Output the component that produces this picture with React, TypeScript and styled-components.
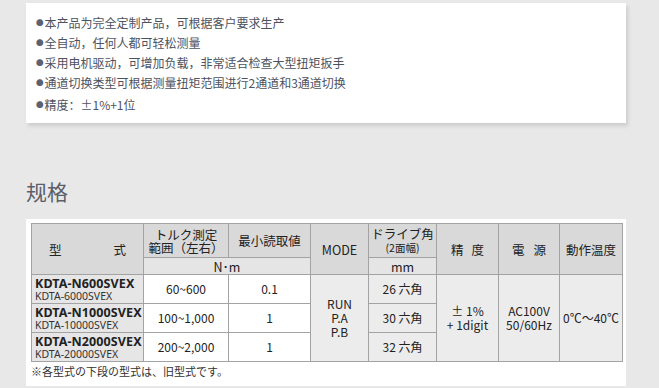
import React from 'react';
import styled, { createGlobalStyle } from 'styled-components';

const GlobalStyle = createGlobalStyle`
  html, body {
    margin: 0;
    padding: 0;
    background: #e8e8e8;
  }
  body {
    font-family: "Noto Sans CJK SC", "Noto Sans", sans-serif;
  }
`;

const Page = styled.div`
  width: 600px;
  padding: 3px 0 0 26px;
`;

const FeatureCard = styled.div`
  background: #fff;
  padding: 10px 10px 8px;
  box-shadow: 2px 3px 4px rgba(0, 0, 0, 0.12);
`;

const Feature = styled.p<{ gap?: number }>`
  margin: ${({ gap }) => gap || 0}px 0 0;
  font-size: 12px;
  line-height: 20px;
  color: #4c525e;
  &::before {
    content: '●';
    font-size: 7.5px;
    color: #5a6170;
    vertical-align: 2px;
    margin-right: 1px;
  }
`;

const Heading = styled.h2`
  margin: 55px 0 0;
  font-size: 21px;
  font-weight: 400;
  line-height: 26px;
  color: #5a5f6a;
`;

const TablePanel = styled.div`
  margin-top: 15px;
  background: #fff;
  padding: 4px 4px 7px 5px;
`;

const Spec = styled.table`
  border-collapse: collapse;
  table-layout: fixed;
  width: 591px;
  font-family: "Noto Sans CJK JP", sans-serif;
  color: #222;
  td, th {
    border: 1px solid #a3a3a3;
    padding: 0;
    text-align: center;
    vertical-align: middle;
    font-weight: 400;
  }
`;

const Head = styled.th<{ tone?: 'sub' }>`
  background: ${({ tone }) => (tone === 'sub' ? '#e5e5e5' : '#d9d9d9')};
  font-size: 12.5px;
  line-height: 13px;
  height: ${({ tone }) => (tone === 'sub' ? 16 : 33)}px;
`;

const Spread = styled.div`
  display: flex;
  justify-content: space-between;
  padding: 0 ${({ pad }: { pad: number }) => pad}px;
`;

const Small = styled.span`
  font-size: 10.5px;
`;

const ModelCell = styled.td`
  background: #e6e6e6;
  text-align: left !important;
  padding-left: 3px !important;
  height: 28px;
  b {
    display: block;
    font-family: "Noto Sans", sans-serif;
    font-size: 12.5px;
    line-height: 13px;
    font-weight: 700;
    letter-spacing: 0.1px;
  }
  span {
    display: block;
    font-family: "Noto Sans", sans-serif;
    font-size: 10.5px;
    line-height: 12px;
    color: #333;
  }
`;

const Cell = styled.td<{ shade?: boolean }>`
  background: ${({ shade }) => (shade ? '#ececec' : '#fff')};
  font-size: 12px;
  line-height: 14px;
`;

const Note = styled.div`
  font-family: "Noto Sans CJK JP", sans-serif;
  font-size: 11px;
  line-height: 16px;
  color: #333;
  margin-top: 1px;
`;

const features = [
  '本产品为完全定制产品，可根据客户要求生产',
  '全自动，任何人都可轻松测量',
  '采用电机驱动，可增加负载，非常适合检查大型扭矩扳手',
  '通道切换类型可根据测量扭矩范围进行2通道和3通道切换',
  '精度：±1%+1位',
];

const models = [
  { name: 'KDTA-N600SVEX', old: 'KDTA-6000SVEX', range: '60~600', min: '0.1', drive: '26 六角' },
  { name: 'KDTA-N1000SVEX', old: 'KDTA-10000SVEX', range: '100~1,000', min: '1', drive: '30 六角' },
  { name: 'KDTA-N2000SVEX', old: 'KDTA-20000SVEX', range: '200~2,000', min: '1', drive: '32 六角' },
];

const widths = [112, 85, 82, 58, 68, 62, 61, 63];

export default function App() {
  return (
    <Page>
      <GlobalStyle />
      <FeatureCard>
        {features.map((f, i) => (
          <Feature key={f} gap={i === 4 ? 2 : 0}>
            {f}
          </Feature>
        ))}
      </FeatureCard>

      <Heading>规格</Heading>

      <TablePanel>
        <Spec>
          <colgroup>
            {widths.map((w, i) => (
              <col key={i} style={{ width: w }} />
            ))}
          </colgroup>
          <thead>
            <tr>
              <Head rowSpan={2}>
                <Spread pad={17}>
                  <span>型</span>
                  <span>式</span>
                </Spread>
              </Head>
              <Head>
                トルク測定
                <br />
                範囲（左右）
              </Head>
              <Head>最小読取値</Head>
              <Head rowSpan={2}>MODE</Head>
              <Head>
                ドライブ角
                <br />
                <Small>(2面幅)</Small>
              </Head>
              <Head rowSpan={2}>
                <Spread pad={14}>
                  <span>精</span>
                  <span>度</span>
                </Spread>
              </Head>
              <Head rowSpan={2}>
                <Spread pad={13}>
                  <span>電</span>
                  <span>源</span>
                </Spread>
              </Head>
              <Head rowSpan={2}>動作温度</Head>
            </tr>
            <tr>
              <Head tone="sub" colSpan={2}>
                N･m
              </Head>
              <Head tone="sub">mm</Head>
            </tr>
          </thead>
          <tbody>
            {models.map((m, i) => (
              <tr key={m.name}>
                <ModelCell>
                  <b>{m.name}</b>
                  <span>{m.old}</span>
                </ModelCell>
                <Cell>{m.range}</Cell>
                <Cell>{m.min}</Cell>
                {i === 0 && (
                  <Cell shade rowSpan={3}>
                    RUN
                    <br />
                    P.A
                    <br />
                    P.B
                  </Cell>
                )}
                <Cell shade>{m.drive}</Cell>
                {i === 0 && (
                  <>
                    <Cell shade rowSpan={3}>
                      ± 1%
                      <br />+ 1digit
                    </Cell>
                    <Cell shade rowSpan={3}>
                      AC100V
                      <br />
                      50/60Hz
                    </Cell>
                    <Cell shade rowSpan={3}>
                      0℃～40℃
                    </Cell>
                  </>
                )}
              </tr>
            ))}
          </tbody>
        </Spec>
        <Note>※各型式の下段の型式は、旧型式です。</Note>
      </TablePanel>
    </Page>
  );
}
